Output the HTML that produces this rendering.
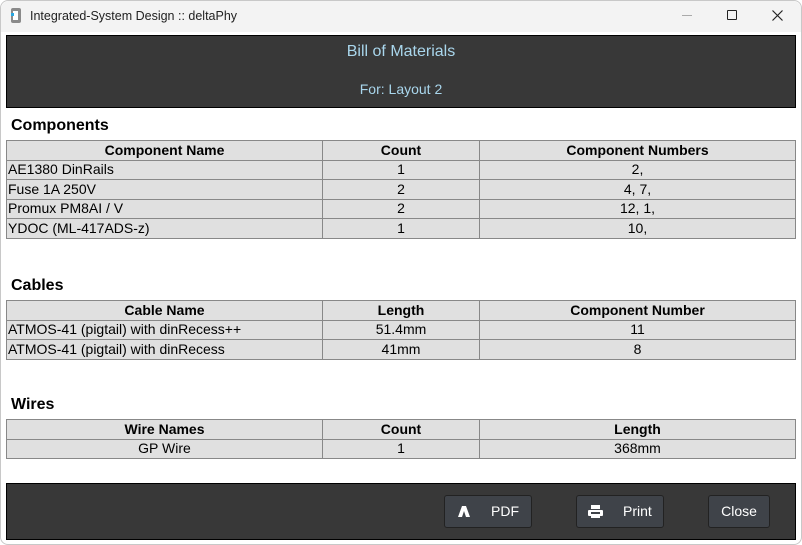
<!DOCTYPE html>
<html><head><style>
*{margin:0;padding:0;box-sizing:border-box}
body{width:802px;height:545px;background:#fff;font-family:"Liberation Sans",Arial,sans-serif;position:relative;overflow:hidden}
.win{position:absolute;left:0;top:0;width:802px;height:545px;box-shadow:inset 0 0 0 1px #c8c8c8;border-radius:8px;background:#fff}
.tb{position:absolute;left:1px;top:1px;width:800px;height:31px;background:#f3f3f3;border-radius:8px 8px 0 0}
.tt{position:absolute;left:29px;top:8px;font-size:12.5px;color:#222}
.hdr{position:absolute;left:6px;top:35px;width:790px;height:73px;background:#383838;border:1px solid #000;text-align:center;color:#a9d6ec}
h2{position:absolute;left:11px;font-size:16px;font-weight:bold;color:#000}
table{position:absolute;left:6px;width:790px;border-collapse:collapse;table-layout:fixed;font-size:14px;background:#e0e0e0}
td,th{border:1px solid #888;height:19.5px;padding:0 1px;line-height:17px;white-space:nowrap}
th{font-weight:bold;text-align:center}
td.c{text-align:center}
.ftr{position:absolute;left:6px;top:483px;width:790px;height:57px;background:#383838;border:1px solid #000}
.btn{position:absolute;top:11px;height:33px;border:1px solid #222;border-radius:3px;background:#3f4349;color:#fff;font-size:14px;line-height:31px}
</style></head><body>
<div class="win">
<div class="tb">
<svg style="position:absolute;left:9px;top:7px" width="12" height="15"><rect x="1" y="0" width="10" height="15" rx="2" fill="#8a8a8a"/><rect x="3" y="3" width="5" height="9" fill="#fff"/><rect x="1" y="5" width="3" height="3" fill="#2aa7e0"/></svg>
<div class="tt">Integrated-System Design :: deltaPhy</div>
<div style="position:absolute;left:681px;top:14px;width:10px;height:1px;background:#aaa"></div>
<div style="position:absolute;left:726px;top:9px;width:10px;height:10px;border:1px solid #222;border-radius:1px"></div>
<svg style="position:absolute;left:771px;top:9px" width="11" height="11"><path d="M0.5 0.5L10.5 10.5M10.5 0.5L0.5 10.5" stroke="#222" stroke-width="1.2"/></svg>
</div>
<div class="hdr"><div style="position:absolute;top:7px;width:100%;font-size:16px">Bill of Materials</div><div style="position:absolute;top:45px;width:100%;font-size:14px">For: Layout 2</div></div>
<h2 style="top:117px">Components</h2>
<table style="top:140px"><colgroup><col style="width:316px"><col style="width:157px"><col></colgroup>
<tr><th>Component Name</th><th>Count</th><th>Component Numbers</th></tr>
<tr><td>AE1380 DinRails</td><td class="c">1</td><td class="c">2,</td></tr>
<tr><td>Fuse 1A 250V</td><td class="c">2</td><td class="c">4, 7,</td></tr>
<tr><td>Promux PM8AI / V</td><td class="c">2</td><td class="c">12, 1,</td></tr>
<tr><td>YDOC (ML-417ADS-z)</td><td class="c">1</td><td class="c">10,</td></tr></table>
<h2 style="top:277px">Cables</h2>
<table style="top:300px"><colgroup><col style="width:316px"><col style="width:157px"><col></colgroup>
<tr><th>Cable Name</th><th>Length</th><th>Component Number</th></tr>
<tr><td>ATMOS-41 (pigtail) with dinRecess++</td><td class="c">51.4mm</td><td class="c">11</td></tr>
<tr><td>ATMOS-41 (pigtail) with dinRecess</td><td class="c">41mm</td><td class="c">8</td></tr></table>
<h2 style="top:396px">Wires</h2>
<table style="top:419px"><colgroup><col style="width:316px"><col style="width:157px"><col></colgroup>
<tr><th>Wire Names</th><th>Count</th><th>Length</th></tr>
<tr><td class="c">GP Wire</td><td class="c">1</td><td class="c">368mm</td></tr></table>
<div class="ftr">
<div class="btn" style="left:437px;width:88px"><svg style="position:absolute;left:13px;top:10px" width="12" height="11"><path d="M4 0H8L12 11H8L6 5L4 11H0Z" fill="#fff"/></svg><span style="position:absolute;left:46px">PDF</span></div>
<div class="btn" style="left:569px;width:88px"><svg style="position:absolute;left:11px;top:9px" width="15" height="13"><rect x="3" y="0" width="9" height="4" fill="#fff"/><rect x="0" y="5" width="15" height="6" rx="1" fill="#fff"/><rect x="3" y="7" width="9" height="2" fill="#3f4349"/><rect x="3" y="11" width="9" height="2" fill="#fff"/></svg><span style="position:absolute;left:46px">Print</span></div>
<div class="btn" style="left:701px;width:62px;text-align:center">Close</div>
</div>
</div>
</body></html>
